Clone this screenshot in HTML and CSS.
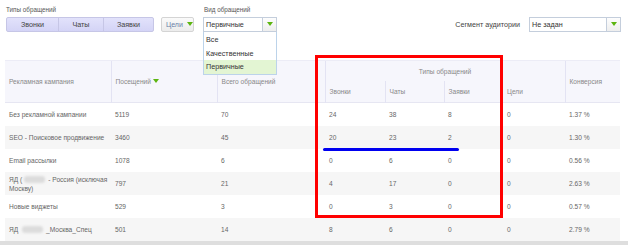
FILE: index.html
```html
<!DOCTYPE html>
<html lang="ru">
<head>
    <meta charset="UTF-8">
    <title>Отчёт по рекламным кампаниям</title>
    <link rel="stylesheet" href="styles.css">
</head>
<body>
    <div class="page">
        <div class="toolbar">
            <div class="field">
                <div class="field-label">Типы обращений</div>
                <div class="btn-group">
                    <button class="seg seg-calls">Звонки</button>
                    <button class="seg seg-chats">Чаты</button>
                    <button class="seg seg-leads">Заявки</button>
                </div>
            </div>
            <div class="field">
                <button class="goals-btn">Цели <span class="tri"></span></button>
            </div>
            <div class="field kind-field">
                <div class="field-label">Вид обращений</div>
                <div class="select select-kind">
                    <span class="select-value">Первичные</span>
                    <span class="select-arrow"><span class="tri"></span></span>
                </div>
                <ul class="dropdown">
                    <li>Все</li>
                    <li>Качественные</li>
                    <li class="active">Первичные</li>
                </ul>
            </div>
            <div class="field segment-field">
                <span class="segment-label">Сегмент аудитории</span>
                <div class="select select-segment">
                    <span class="select-value">Не задан</span>
                    <span class="select-arrow"><span class="tri"></span></span>
                </div>
            </div>
        </div>

        <table class="report">
            <colgroup>
                <col style="width: 106px">
                <col style="width: 106px">
                <col style="width: 108px">
                <col style="width: 60px">
                <col style="width: 59px">
                <col style="width: 59px">
                <col style="width: 62px">
                <col style="width: 55px">
            </colgroup>
            <thead>
                <tr>
                    <th rowspan="2">Рекламная кампания</th>
                    <th rowspan="2">Посещений <span class="tri"></span></th>
                    <th rowspan="2">Всего обращений</th>
                    <th colspan="4" class="group-head">Типы обращений</th>
                    <th rowspan="2">Конверсия</th>
                </tr>
                <tr class="sub-head">
                    <th>Звонки</th>
                    <th>Чаты</th>
                    <th>Заявки</th>
                    <th class="no-border">Цели</th>
                </tr>
            </thead>
            <tbody>
                <tr>
                    <td>Без рекламной кампании</td>
                    <td>5119</td>
                    <td>70</td>
                    <td>24</td>
                    <td>38</td>
                    <td>8</td>
                    <td>0</td>
                    <td>1.37 %</td>
                </tr>
                <tr>
                    <td class="nowrap">SEO - Поисковое продвижение</td>
                    <td>3460</td>
                    <td>45</td>
                    <td>20</td>
                    <td>23</td>
                    <td>2</td>
                    <td>0</td>
                    <td>1.30 %</td>
                </tr>
                <tr>
                    <td>Email рассылки</td>
                    <td>1078</td>
                    <td>6</td>
                    <td>0</td>
                    <td>6</td>
                    <td>0</td>
                    <td>0</td>
                    <td>0.56 %</td>
                </tr>
                <tr>
                    <td class="nowrap">ЯД (<span class="blur"></span>- Россия (исключая<br>Москву)</td>
                    <td>797</td>
                    <td>21</td>
                    <td>4</td>
                    <td>17</td>
                    <td>0</td>
                    <td>0</td>
                    <td>2.63 %</td>
                </tr>
                <tr>
                    <td>Новые виджеты</td>
                    <td>529</td>
                    <td>3</td>
                    <td>0</td>
                    <td>3</td>
                    <td>0</td>
                    <td>0</td>
                    <td>0.57 %</td>
                </tr>
                <tr>
                    <td class="nowrap">ЯД <span class="blur"></span>_Москва_Спец</td>
                    <td>501</td>
                    <td>14</td>
                    <td>8</td>
                    <td>6</td>
                    <td>0</td>
                    <td>0</td>
                    <td>2.79 %</td>
                </tr>
            </tbody>
        </table>
        <div class="scroll-strip"></div>

        <!-- annotation marks drawn over the screenshot -->
        <div class="mark-box"></div>
        <div class="mark-line"></div>
    </div>
</body>
</html>
```

FILE: styles.css
```css
body {
    margin: 0;
    background-color: #fff;
    font-family: "Liberation Sans", Arial, sans-serif;
    color: #555;
}
.page {
    position: relative;
    width: 628px;
    height: 245px;
    overflow: hidden;
    padding: 0 0 0 5px;
    box-sizing: border-box;
}

/* toolbar */
.toolbar {
    display: flex;
    align-items: flex-end;
    height: 32px;
    margin-bottom: 28px;
    padding-right: 7px;
}
.field {
    position: relative;
}
.field-label {
    font-size: 6.3px;
    color: #555;
    margin: 0 0 4px 1px;
    line-height: 7px;
}
.btn-group {
    display: flex;
    margin-left: 1px;
    border: 1px solid #c6c6e6;
    border-radius: 2px;
    background: linear-gradient(#e2e2fb, #d4d4f6);
    height: 13px;
}
.seg {
    border: none;
    border-left: 1px solid #c6c6e6;
    background: none;
    font-family: inherit;
    font-size: 7.2px;
    color: #444;
    padding: 0;
    height: 13px;
    line-height: 13px;
}
.seg:first-child {
    border-left: none;
}
.seg-calls { width: 51px; }
.seg-chats { width: 45px; }
.seg-leads { width: 50px; }

.goals-btn {
    margin-left: 7px;
    height: 15px;
    width: 33px;
    padding: 0 0 0 4px;
    text-align: left;
    white-space: nowrap;
    border: 1px solid #d4d4d4;
    border-radius: 2px;
    background: linear-gradient(#fafafa, #ececec);
    font-family: inherit;
    font-size: 7px;
    color: #6a7fa8;
    line-height: 13px;
}
.goals-btn .tri {
    margin-left: 2px;
}

.tri {
    display: inline-block;
    width: 0;
    height: 0;
    border-left: 3px solid transparent;
    border-right: 3px solid transparent;
    border-top: 4px solid #5cb510;
    vertical-align: 1px;
}

.kind-field {
    margin-left: 9px;
}
.select {
    display: flex;
    height: 13px;
    border: 1px solid #c4cedc;
    background-color: #fff;
    font-size: 7.2px;
    color: #333;
    line-height: 13px;
}
.select-value {
    flex: 1;
    padding-left: 2px;
}
.select-arrow {
    width: 13px;
    border-left: 1px solid #c4cedc;
    background: linear-gradient(#fdfdfd, #eeeeee);
    text-align: center;
}
.select-kind {
    width: 72px;
}
.dropdown {
    position: absolute;
    top: 100%;
    left: 0;
    width: 72px;
    margin: 0;
    padding: 0;
    list-style: none;
    border: 1px solid #bcd3ea;
    border-top: none;
    background-color: #fff;
    font-size: 7.2px;
    color: #333;
    z-index: 2;
}
.dropdown li {
    height: 13.6px;
    line-height: 14px;
    padding-left: 2px;
}
.dropdown li:first-child {
    padding-top: 1px;
}
.dropdown .active {
    background-color: #e3f5d3;
}

.segment-field {
    margin-left: auto;
    display: flex;
    align-items: center;
}
.segment-label {
    font-size: 7.2px;
    color: #444;
    margin-right: 9px;
}
.select-segment {
    width: 90px;
}

/* table */
.report {
    width: 615px;
    border-collapse: collapse;
    table-layout: fixed;
    font-size: 6.6px;
}
.report th {
    background-color: #f6f6fc;
    color: #888;
    font-weight: normal;
    text-align: left;
    padding: 0 4px;
    border-left: 1px solid #e3e3f3;
    border-top: 1px solid #ececf6;
    height: 20px;
}
.report th:first-child {
    border-left: none;
}
.report .group-head {
    text-align: center;
}
.report .sub-head th {
    border-top: none;
    height: 21px;
}
.report .sub-head th:first-child {
    border-left: 1px solid #e3e3f3;
}
.report .sub-head .no-border {
    border-left: none;
}
.report thead {
    border-bottom: 1px solid #e6e6f2;
}
.report td {
    height: 21px;
    padding: 1px 4px;
    line-height: 9px;
    color: #666;
    vertical-align: middle;
}
.report .nowrap {
    white-space: nowrap;
}
.report tbody tr:nth-child(even) td {
    background-color: #f6f6f6;
}
.blur {
    display: inline-block;
    width: 21px;
    height: 7px;
    margin: 0 3px 0 2px;
    background-color: #dcdcdc;
    border-radius: 3px;
    filter: blur(1.2px);
    vertical-align: -1px;
}

.scroll-strip {
    height: 4px;
    margin: 0 -8px 0 -5px;
    background-color: #dedede;
}

/* annotation marks */
.mark-box {
    position: absolute;
    left: 315px;
    top: 55px;
    width: 182px;
    height: 157px;
    border: 3px solid #ff0000;
}
.mark-line {
    position: absolute;
    left: 323px;
    top: 148px;
    width: 136px;
    height: 3px;
    border-radius: 2px;
    background-color: #0000f0;
}
```
